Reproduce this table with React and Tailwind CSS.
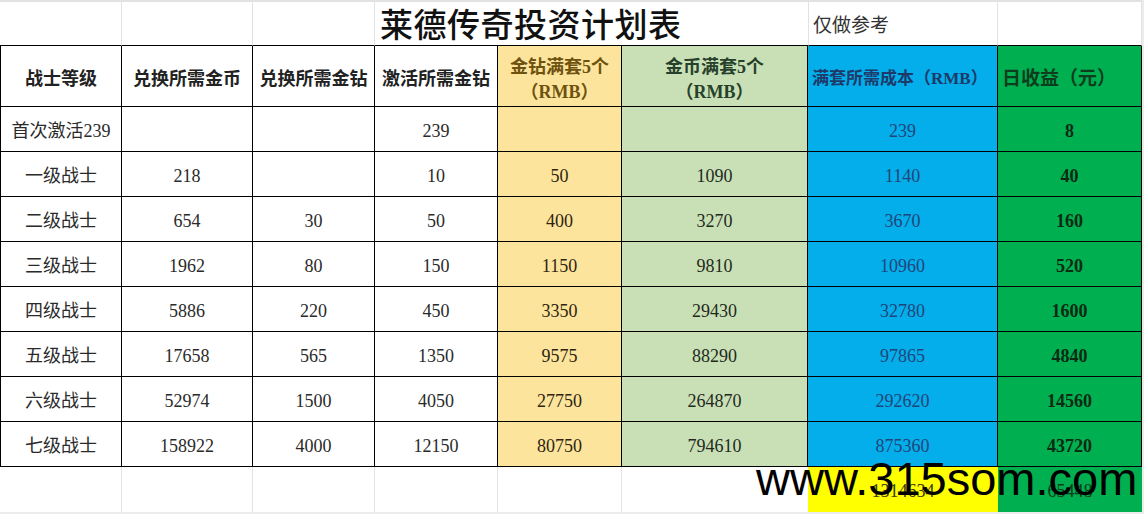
import React from "react";

const FONT = "font-['Liberation_Serif','Noto_Sans_CJK_SC',serif]";
const CJK = "font-['Noto_Sans_CJK_SC',sans-serif]";

const rows = [
  ["首次激活239", "", "", "239", "", "", "239", "8"],
  ["一级战士", "218", "", "10", "50", "1090", "1140", "40"],
  ["二级战士", "654", "30", "50", "400", "3270", "3670", "160"],
  ["三级战士", "1962", "80", "150", "1150", "9810", "10960", "520"],
  ["四级战士", "5886", "220", "450", "3350", "29430", "32780", "1600"],
  ["五级战士", "17658", "565", "1350", "9575", "88290", "97865", "4840"],
  ["六级战士", "52974", "1500", "4050", "27750", "264870", "292620", "14560"],
  ["七级战士", "158922", "4000", "12150", "80750", "794610", "875360", "43720"],
];

const bodyCellStyle = [
  "bg-white text-[#2a2a2a] border-l",
  "bg-white text-[#2a2a2a]",
  "bg-white text-[#2a2a2a]",
  "bg-white text-[#2a2a2a]",
  "bg-[#fde49c] text-[#2e2410]",
  "bg-[#c9e0b6] text-[#1f2a1d]",
  "bg-[#03aeea] text-[#21457a]",
  "bg-[#00af50] text-[#0d2a12] font-bold",
];

export default function App() {
  return (
    <div className={`relative w-[1144px] h-[514px] bg-[#ececec] overflow-hidden ${FONT}`}>
      <div className="grid grid-cols-[122px_131px_122px_123px_124px_186px_190px_144px] w-[1142px] bg-white">
        {/* title row */}
        <div className="h-[46px] border-r border-t-2 border-[#e2e2e2] border-b border-b-black"></div>
        <div className="h-[46px] border-r border-t-2 border-[#e2e2e2] border-b border-b-black"></div>
        <div className="h-[46px] border-r border-t-2 border-[#e2e2e2] border-b border-b-black"></div>
        <div className="col-span-3 h-[46px] border-t-2 border-[#e2e2e2] border-b border-b-black flex items-center pl-[5px]">
          <span className={`${CJK} text-[33px] font-medium text-[#111] leading-none tracking-[0.5px]`}>莱德传奇投资计划表</span>
        </div>
        <div className="h-[46px] border-l border-r border-t-2 border-[#e2e2e2] border-b border-b-black flex items-center pl-[4px]">
          <span className={`${CJK} text-[19px] text-[#333] leading-none`}>仅做参考</span>
        </div>
        <div className="h-[46px] border-r border-t-2 border-[#e2e2e2] border-b border-b-black"></div>

        {/* header row */}
        <div className="h-[61px] border-l border-r border-b border-black flex items-center justify-center pt-[2px]">
          <span className={`${CJK} text-[18px] font-bold text-[#222]`}>战士等级</span>
        </div>
        <div className="h-[61px] border-r border-b border-black flex items-center justify-center pt-[2px]">
          <span className={`${CJK} text-[18px] font-bold text-[#222]`}>兑换所需金币</span>
        </div>
        <div className="h-[61px] border-r border-b border-black flex items-center justify-center pt-[2px]">
          <span className={`${CJK} text-[18px] font-bold text-[#222]`}>兑换所需金钻</span>
        </div>
        <div className="h-[61px] border-r border-b border-black flex items-center justify-center pt-[2px]">
          <span className={`${CJK} text-[18px] font-bold text-[#222]`}>激活所需金钻</span>
        </div>
        <div className="h-[61px] border-r border-b border-black bg-[#fde49c] flex flex-col items-center justify-center pt-[8px] text-[#6e5210] font-bold leading-[25px] text-[18px]">
          <span>金钻满套5个</span>
          <span>（RMB）</span>
        </div>
        <div className="h-[61px] border-r border-b border-black bg-[#c9e0b6] flex flex-col items-center justify-center pt-[8px] text-[#27402b] font-bold leading-[25px] text-[18px]">
          <span>金币满套5个</span>
          <span>（RMB）</span>
        </div>
        <div className="h-[61px] border-r border-b border-black bg-[#03aeea] flex items-center pl-[4px] pt-[6px] text-[#1d3a6a] font-bold text-[17px]">
          <span>满套所需成本（RMB）</span>
        </div>
        <div className="h-[61px] border-r border-b border-black bg-[#00af50] flex items-center pl-[4px] pt-[6px] text-[#0d3d1c] font-bold text-[19px]">
          <span>日收益（元）</span>
        </div>

        {/* data rows */}
        {rows.map((r, i) =>
          r.map((v, j) => (
            <div
              key={`${i}-${j}`}
              className={`h-[45px] border-r border-b border-black flex items-center justify-center pt-[4px] text-[18px] ${bodyCellStyle[j]}`}
            >
              {v}
            </div>
          ))
        )}

        {/* bottom row */}
        <div className="h-[45px] border-r border-[#e4e4e4] bg-white"></div>
        <div className="h-[45px] border-r border-[#e4e4e4] bg-white"></div>
        <div className="h-[45px] border-r border-[#e4e4e4] bg-white"></div>
        <div className="h-[45px] border-r border-[#e4e4e4] bg-white"></div>
        <div className="h-[45px] border-r border-[#e4e4e4] bg-white"></div>
        <div className="h-[45px] bg-white"></div>
        <div className="h-[45px] bg-[#ffff00] flex items-center justify-center pt-[4px] text-[18px] text-[#3a3a10]">1314634</div>
        <div className="h-[45px] bg-[#00af50] flex items-center justify-center pt-[4px] text-[18px] text-[#0d3d1c]">65448</div>
      </div>

      {/* watermark */}
      <div className="absolute left-[756px] top-[461px] font-['Liberation_Sans',Arial,sans-serif] text-[47px] leading-[36px] text-black">
        www.315som.com
      </div>
    </div>
  );
}
